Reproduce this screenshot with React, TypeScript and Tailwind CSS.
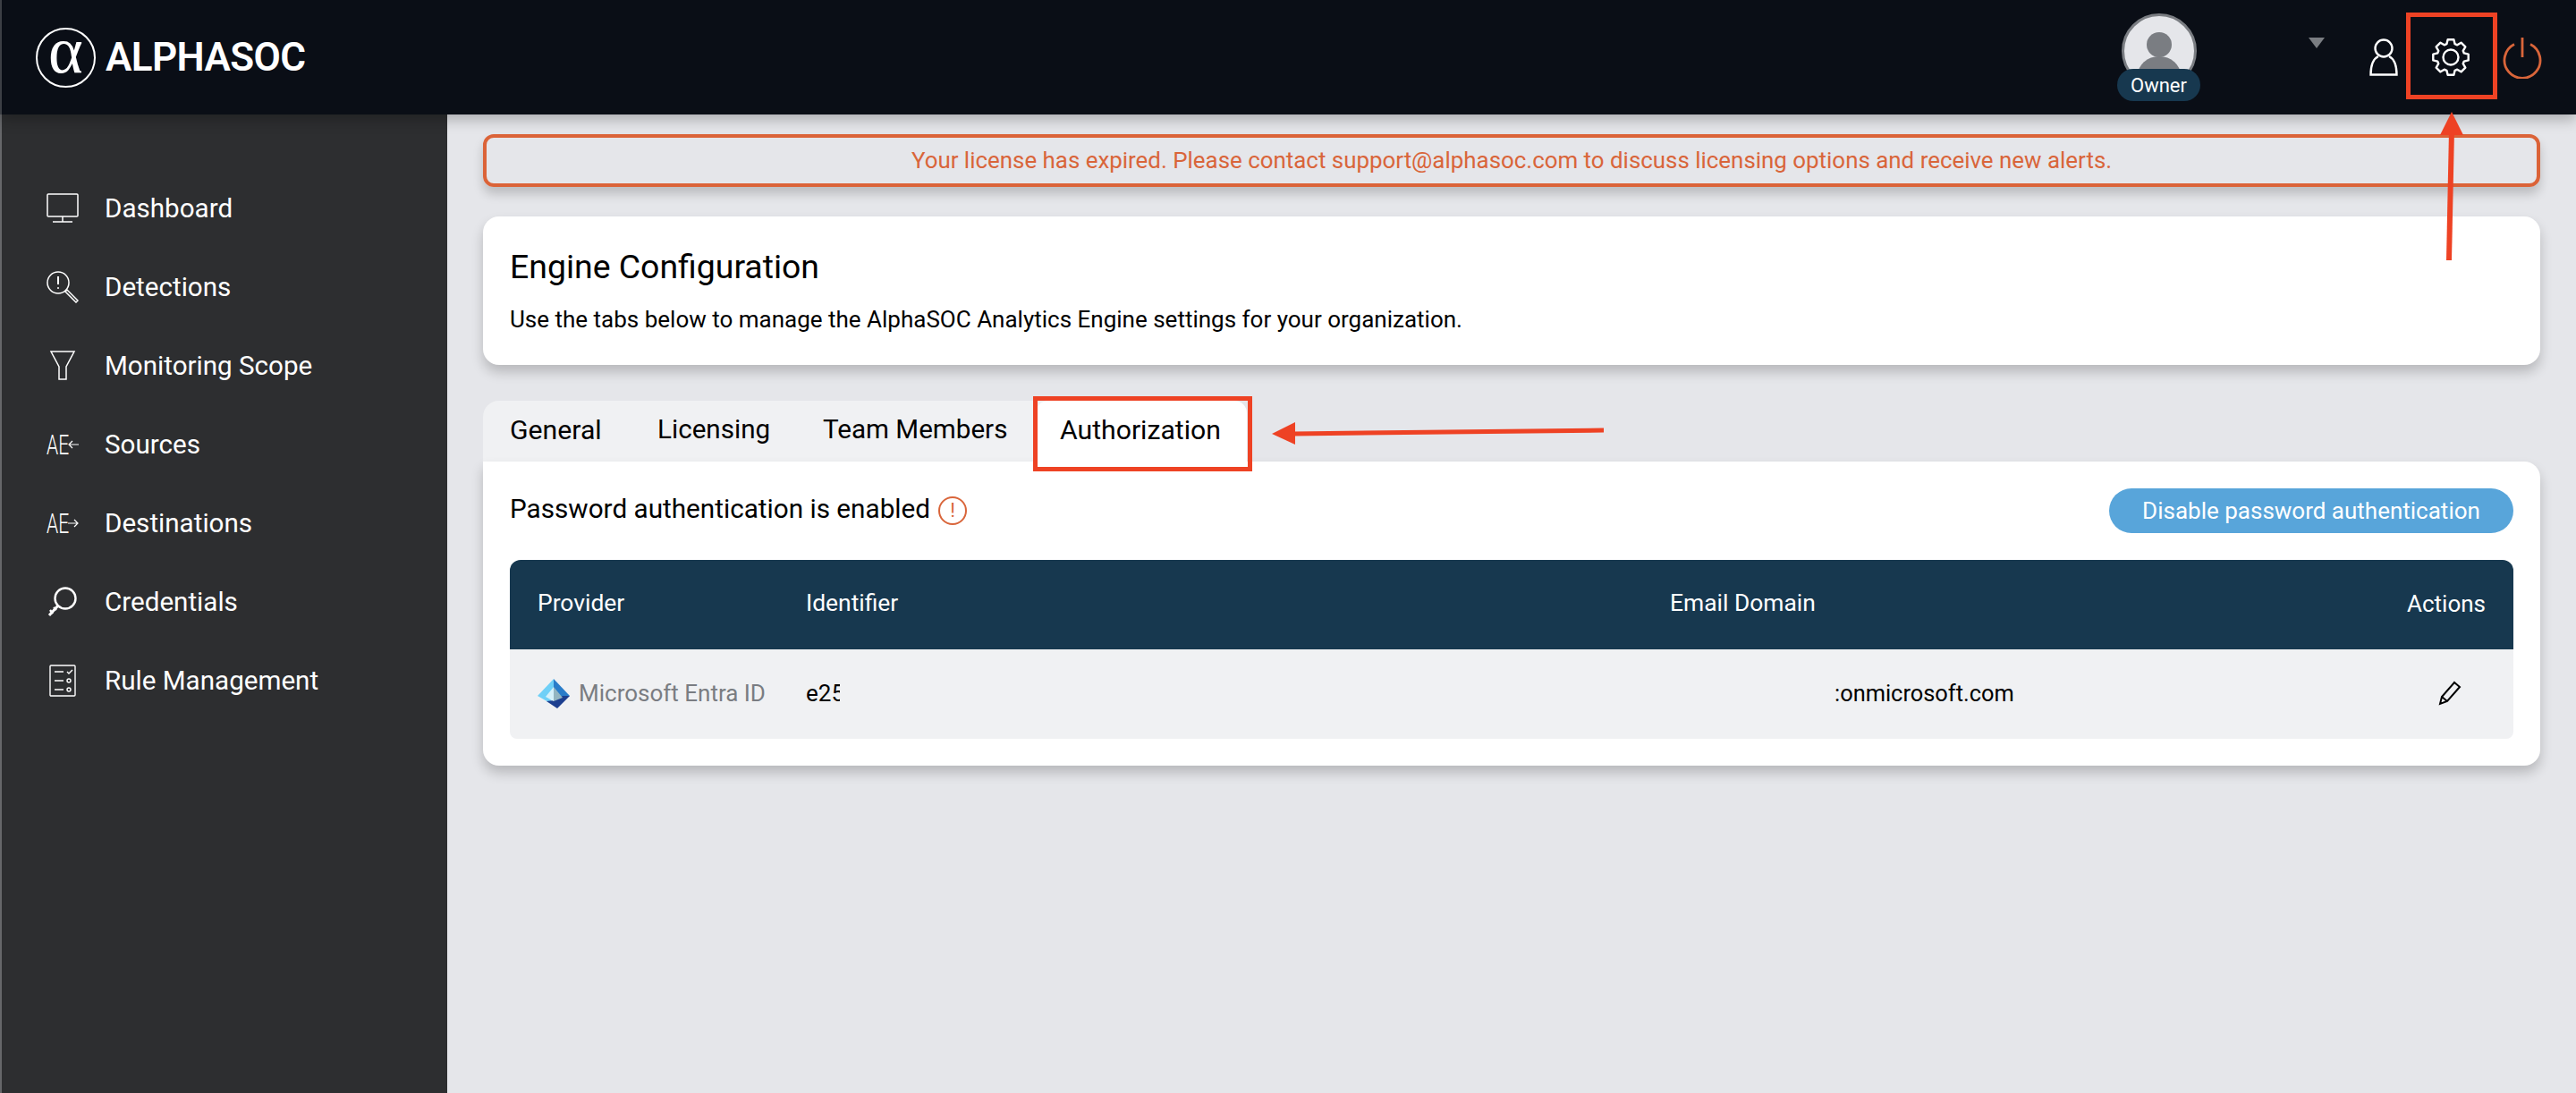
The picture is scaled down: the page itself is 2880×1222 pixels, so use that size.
const navItems = [
    { label: 'Dashboard', icon: <MonitorIcon /> },
    { label: 'Detections', icon: <DetectionIcon /> },
    { label: 'Monitoring Scope', icon: <FunnelIcon /> },
    { label: 'Sources', icon: <AeIcon direction="in" /> },
    { label: 'Destinations', icon: <AeIcon direction="out" /> },
    { label: 'Credentials', icon: <KeyIcon /> },
    { label: 'Rule Management', icon: <RulesIcon /> },
];

function MonitorIcon() {
    return (
        <svg width="36" height="34" viewBox="0 0 36 34" fill="none" stroke="white" strokeWidth="1.5">
            <rect x="1" y="1" width="34" height="25" rx="1" />
            <path d="M18 26v6M7 32h22" />
        </svg>
    );
}

function DetectionIcon() {
    return (
        <svg width="36" height="36" viewBox="0 0 36 36" fill="none" stroke="white" strokeWidth="1.5">
            <circle cx="13" cy="13" r="12" />
            <path d="M13 6v9" strokeWidth="2" />
            <circle cx="13" cy="19" r="1" fill="white" stroke="none" />
            <path d="M21 23l2-2 12 12-2 2z" />
        </svg>
    );
}

function FunnelIcon() {
    return (
        <svg width="36" height="34" viewBox="0 0 36 34" fill="none" stroke="white" strokeWidth="1.5">
            <path d="M5 1h26L22 18v14h-8V18z" />
        </svg>
    );
}

function AeIcon({ direction }: { direction: 'in' | 'out' }) {
    return (
        <div className="flex w-[36px] items-center">
            <span className="w-[24px] origin-left scale-x-[0.68] text-[31px] font-light leading-none text-white">AE</span>
            <svg width="12" height="12" viewBox="0 0 12 12" fill="none" stroke="white" strokeWidth="1.2">
                {direction === 'in' ? <path d="M12 6H1M5 2L1 6l4 4" /> : <path d="M0 6h11M7 2l4 4-4 4" />}
            </svg>
        </div>
    );
}

function KeyIcon() {
    return (
        <svg width="36" height="34" viewBox="0 0 36 34" fill="none" stroke="white" strokeWidth="2.4">
            <circle cx="21" cy="13" r="11.5" />
            <path d="M13 21L3 32" strokeWidth="3" />
            <path d="M4 26l3 4M8 23l3 3" />
        </svg>
    );
}

function RulesIcon() {
    return (
        <svg width="36" height="36" viewBox="0 0 36 36" fill="none" stroke="white" strokeWidth="1.4">
            <rect x="4" y="1" width="28" height="34" rx="1" />
            <path d="M9 8h10M9 18h10M9 28h10M23 8l2 2 4-4" />
            <circle cx="25" cy="18" r="2" />
            <circle cx="25" cy="28" r="2" />
        </svg>
    );
}

function EntraLogo() {
    return (
        <svg width="37" height="33" viewBox="0 0 37 33">
            <path d="M18 0L0 19l14 8 4-9z" fill="#6fd0f7" />
            <path d="M18 0l18 19-8 4-10-13z" fill="#2a7dc9" />
            <path d="M36 19L22 33 10 25l8-1 10-5z" fill="#1d3f8f" />
            <path d="M18 9L9 20l9 5z" fill="#d5f1fa" />
            <path d="M18 9l10 12-10 4z" fill="#93b5c0" />
        </svg>
    );
}

// 8 square teeth round the rim of the settings gear
function gearPath() {
    const cx = 23;
    const cy = 23;
    const points: string[] = [];
    for (let i = 0; i < 8; i++) {
        const a = (i * Math.PI) / 4;
        const pt = (r: number, d: number) => `${(cx + r * Math.cos(a + d)).toFixed(2)} ${(cy + r * Math.sin(a + d)).toFixed(2)}`;
        points.push(pt(15.5, -0.3), pt(20, -0.17), pt(20, 0.17), pt(15.5, 0.3));
    }
    return `M${points.join('L')}Z`;
}

function GearIcon() {
    return (
        <svg width="46" height="46" viewBox="0 0 46 46" fill="none" stroke="white" strokeWidth="2.4" strokeLinejoin="round">
            <path d={gearPath()} />
            <circle cx="23" cy="23" r="8.5" />
        </svg>
    );
}

function PowerIcon() {
    return (
        <svg width="44" height="48" viewBox="0 0 44 48" fill="none" stroke="#d9653a" strokeWidth="2.8">
            <path d="M13 9.5A20 20 0 1 0 31 9.5" />
            <path d="M22 2v22" />
        </svg>
    );
}

export default function App() {
    return (
        <div className="relative flex h-[1222px] w-[2880px] flex-col overflow-hidden bg-[#e5e6ea] [font-family:Roboto,sans-serif]">
            {/* Top bar */}
            <header className="relative z-10 flex h-[128px] shrink-0 items-center border-l-2 border-[#3c3f45] bg-[#0a0e16] shadow-[0_6px_14px_rgba(0,0,0,0.25)]">
                <div className="ml-[38px] flex items-center gap-[11px]">
                    <div className="flex h-[67px] w-[67px] items-center justify-center rounded-full border-2 border-white pb-[16px] text-[74px] leading-none text-white [font-family:'Liberation_Serif',serif]">
                        α
                    </div>
                    <span className="text-[44px] font-semibold leading-none tracking-[-0.6px] text-white">ALPHASOC</span>
                </div>

                <div className="ml-auto mr-[38px] flex items-center">
                    <div className="relative h-[100px] w-[94px]">
                        <div className="absolute left-[5px] top-[1px] flex h-[84px] w-[84px] items-end justify-center overflow-hidden rounded-full border-[3px] border-[#7a7d82] bg-[#e5e6ea]">
                            <svg width="60" height="70" viewBox="0 0 60 70" fill="#7a7d82">
                                <circle cx="30" cy="24" r="14" />
                                <ellipse cx="30" cy="58" rx="24" ry="21" />
                            </svg>
                        </div>
                        <div className="absolute left-0 top-[63px] flex h-[36px] w-[93px] items-center justify-center rounded-full bg-[#17384f] text-[22px] text-white">
                            Owner
                        </div>
                    </div>
                    <svg className="mb-[32px] ml-[120px]" width="18" height="12" viewBox="0 0 18 12" fill="#7a7d82">
                        <path d="M0 0h18L9 12z" />
                    </svg>
                    <svg className="ml-[50px]" width="32" height="42" viewBox="0 0 32 42" fill="none" stroke="white" strokeWidth="2.4">
                        <circle cx="16" cy="11" r="9.5" />
                        <path d="M10 20C4 23 1.5 31 1.5 40.5h29C30.5 31 28 23 22 20" />
                    </svg>
                    <div className="ml-[36px]">
                        <GearIcon />
                    </div>
                    <div className="ml-[35px]">
                        <PowerIcon />
                    </div>
                </div>
            </header>

            <div className="flex min-h-0 flex-1">
                {/* Sidebar */}
                <aside className="w-[500px] shrink-0 border-l-2 border-[#66676a] bg-[#2d2e30] pl-[50px] pt-[61px]">
                    <nav className="flex flex-col">
                        {navItems.map((item) => (
                            <div key={item.label} className="flex h-[88px] items-center gap-[29px]">
                                <div className="flex w-[36px] justify-center">{item.icon}</div>
                                <span className="text-[29.6px] text-white">{item.label}</span>
                            </div>
                        ))}
                    </nav>
                </aside>

                {/* Main content */}
                <main className="min-w-0 flex-1 px-[40px] pt-[22px]">
                    <div className="flex h-[59px] items-center justify-center rounded-[12px] border-[4px] border-[#db6338] text-[25.9px] text-[#d9653a] shadow-[0_8px_12px_rgba(0,0,0,0.18)]">
                        Your license has expired. Please contact support@alphasoc.com to discuss licensing options and receive new alerts.
                    </div>

                    <section className="mt-[33px] h-[166px] rounded-[18px] bg-white px-[30px] pt-[33px] shadow-[0_8px_14px_rgba(0,0,0,0.2)]">
                        <h1 className="text-[37.4px] leading-[46px] text-black">Engine Configuration</h1>
                        <p className="mt-[19px] text-[26px] leading-[34px] text-black">
                            Use the tabs below to manage the AlphaSOC Analytics Engine settings for your organization.
                        </p>
                    </section>

                    <section className="mt-[40px]">
                        <div className="flex w-fit rounded-t-[18px] bg-[#f0f1f3] text-[29.6px] text-black">
                            <div className="flex h-[68px] w-[165px] items-center pb-[3px] pl-[30px] text-[30.2px]">General</div>
                            <div className="flex h-[68px] w-[185px] items-center pb-[3px] pl-[30px]">Licensing</div>
                            <div className="flex h-[68px] w-[268px] items-center pb-[3px] pl-[30px]">Team Members</div>
                            <div className="flex h-[68px] w-[236px] items-center rounded-t-[14px] bg-white pb-[3px] pl-[27px] text-[30.2px]">Authorization</div>
                        </div>
                        <div className="rounded-b-[18px] rounded-tr-[18px] bg-white p-[30px] shadow-[0_8px_14px_rgba(0,0,0,0.2)]">
                            <div className="flex h-[50px] items-center justify-between">
                                <div className="flex items-center gap-[9px] text-[29.7px] text-black">
                                    <span className="pb-[3px]">Password authentication is enabled</span>
                                    <span className="flex h-[32px] w-[32px] items-center justify-center rounded-full border-2 border-[#d9653a] text-[22px] text-[#d9653a]">!</span>
                                </div>
                                <button className="h-[50px] w-[452px] rounded-full bg-[#58a5da] text-[26px] text-white">
                                    Disable password authentication
                                </button>
                            </div>

                            <div className="mt-[30px]">
                                <div className="grid h-[100px] grid-cols-[300px_966px_1fr_auto] items-center rounded-t-[12px] bg-[#17384f] px-[31px] pb-[2px] text-[26.4px] text-white">
                                    <div>Provider</div>
                                    <div>Identifier</div>
                                    <div>Email Domain</div>
                                    <div className="text-[26px]">Actions</div>
                                </div>
                                <div className="grid h-[100px] grid-cols-[300px_966px_1fr_auto] items-center rounded-b-[8px] bg-[#f0f1f3] px-[31px] pb-[2px] text-[26px] text-black">
                                    <div className="flex items-center gap-[9px] text-[#7a7d82]">
                                        <EntraLogo />
                                        Microsoft Entra ID
                                    </div>
                                    <div className="w-[38px] overflow-hidden whitespace-nowrap">e25</div>
                                    <div className="pl-[184px] text-[25.4px]">:onmicrosoft.com</div>
                                    <div className="flex justify-start pr-[25px]">
                                        <svg width="28" height="28" viewBox="0 0 28 28" fill="none" stroke="black" strokeWidth="2">
                                            <path d="M2 26l2-8L18 2l6 5L10 23zM4 18l6 5" />
                                        </svg>
                                    </div>
                                </div>
                            </div>
                        </div>
                    </section>
                </main>
            </div>

            {/* Red annotations drawn over the screenshot */}
            <svg className="pointer-events-none absolute left-0 top-0 z-20" width="2880" height="1222" viewBox="0 0 2880 1222" fill="none">
                <rect x="2692.5" y="16.5" width="97" height="92" stroke="#ee4224" strokeWidth="5" />
                <rect x="1157.5" y="445.5" width="240" height="79" stroke="#ee4224" strokeWidth="5" />
                <path d="M2738 291L2741 146" stroke="#ee4224" strokeWidth="6" />
                <path d="M2741 125l13 26h-26z" fill="#ee4224" />
                <path d="M1793 481L1446 485" stroke="#ee4224" strokeWidth="5" />
                <path d="M1422 485l26-13v25z" fill="#ee4224" />
            </svg>
        </div>
    );
}
